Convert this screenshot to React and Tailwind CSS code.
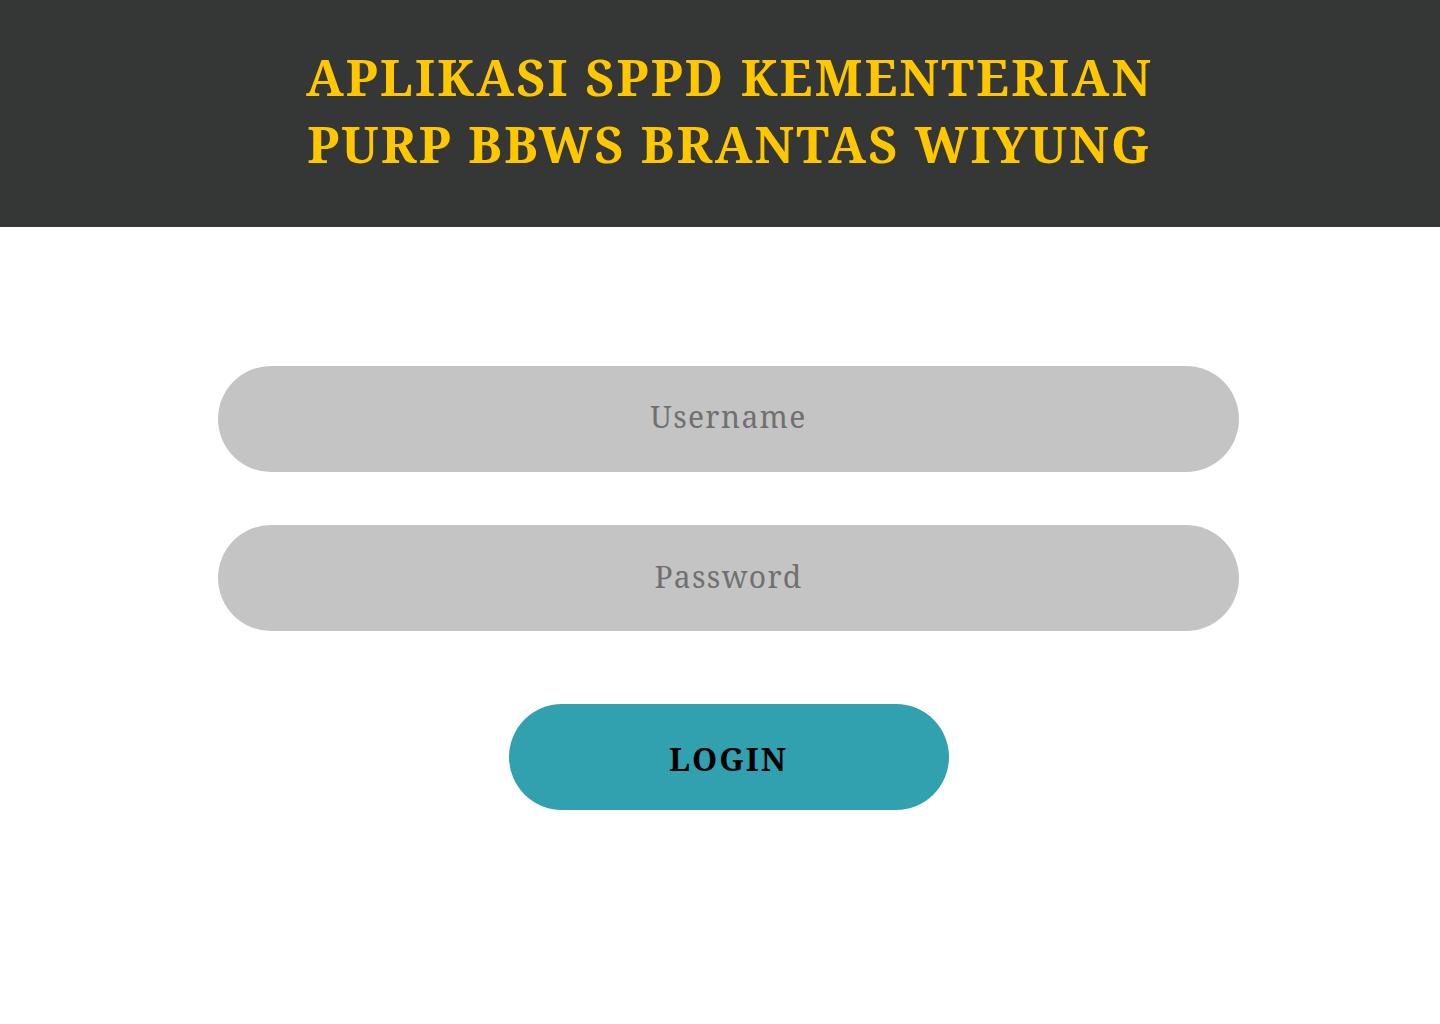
import { useState } from "react";

export default function App() {
  const [username, setUsername] = useState("");
  const [password, setPassword] = useState("");

  return (
    <div className="min-h-screen bg-white font-['Noto_Serif','DejaVu_Serif',serif]">
      {/* Header */}
      <header className="h-[227px] bg-[#353636] flex items-center justify-center pl-[19px]">
        <h1 className="text-center text-[50px] leading-[67px] font-bold tracking-[2.3px] text-[#ffc700] -mt-[6px]">
          APLIKASI SPPD KEMENTERIAN
          <br />
          PURP BBWS BRANTAS WIYUNG
        </h1>
      </header>

      {/* Login form */}
      <main className="flex flex-col items-center pt-[139px] pl-[17px]">
        <input
          type="text"
          value={username}
          onChange={(e) => setUsername(e.target.value)}
          placeholder="Username"
          className="w-[1021px] h-[106px] pb-[5px] rounded-full bg-[#c4c4c4] text-center text-[30px] tracking-[1.3px] text-[#555] placeholder:text-[#707070] outline-none"
        />
        <input
          type="password"
          value={password}
          onChange={(e) => setPassword(e.target.value)}
          placeholder="Password"
          className="mt-[53px] w-[1021px] h-[106px] pb-[4px] rounded-full bg-[#c4c4c4] text-center text-[30px] tracking-[1.3px] text-[#555] placeholder:text-[#707070] outline-none"
        />
        <button className="mt-[73px] w-[440px] h-[106px] pt-[3px] rounded-full bg-[#31a0af] text-[32px] font-bold tracking-[2px] text-black">
          LOGIN
        </button>
      </main>
    </div>
  );
}
